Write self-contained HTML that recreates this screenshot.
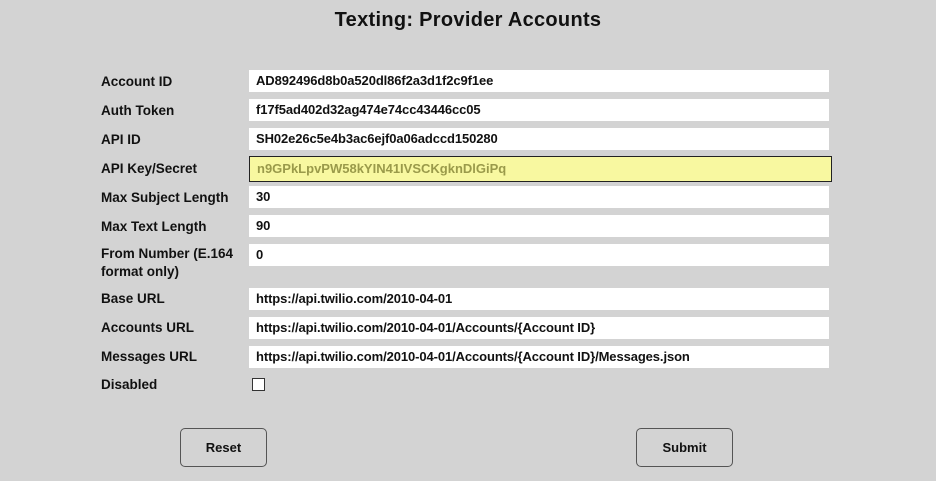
<!DOCTYPE html>
<html><head><meta charset="utf-8"><style>
html,body{margin:0;padding:0;}
body{width:936px;height:481px;background:#d3d3d3;position:relative;overflow:hidden;font-family:"Liberation Sans",Arial,sans-serif;color:#111;}
h1{position:absolute;left:0;width:936px;top:9px;margin:0;text-align:center;font-size:20px;font-weight:bold;letter-spacing:0.3px;}
.l{position:absolute;left:101px;font-size:13.5px;font-weight:bold;line-height:18px;}
.i{position:absolute;left:249px;width:573px;height:22px;background:#fff;font-size:13px;font-weight:bold;line-height:22px;padding-left:7px;letter-spacing:-0.1px;}
.k{background:#f8f8a0;color:#9a9a4a;border:1px solid #222;height:24px;line-height:24px;width:574px;font-weight:bold;letter-spacing:0;}
.cb{position:absolute;left:252px;top:378px;width:11px;height:11px;border:1px solid #333;background:#fff;}
.b{position:absolute;top:428px;height:37px;border:1px solid #555;border-radius:5px;font-size:13px;font-weight:bold;line-height:37px;text-align:center;}
</style></head><body>
<h1>Texting: Provider Accounts</h1>
<div class="l" style="top:73px">Account ID</div><div class="i" style="top:70px">AD892496d8b0a520dl86f2a3d1f2c9f1ee</div>
<div class="l" style="top:102px">Auth Token</div><div class="i" style="top:99px">f17f5ad402d32ag474e74cc43446cc05</div>
<div class="l" style="top:131px">API ID</div><div class="i" style="top:128px">SH02e26c5e4b3ac6ejf0a06adccd150280</div>
<div class="l" style="top:160px">API Key/Secret</div><div class="i k" style="top:156px">n9GPkLpvPW58kYIN41IVSCKgknDlGiPq</div>
<div class="l" style="top:189px">Max Subject Length</div><div class="i" style="top:186px">30</div>
<div class="l" style="top:218px">Max Text Length</div><div class="i" style="top:215px">90</div>
<div class="l" style="top:245px">From Number (E.164<br>format only)</div><div class="i" style="top:244px">0</div>
<div class="l" style="top:290px">Base URL</div><div class="i" style="top:288px">https://api.twilio.com/2010-04-01</div>
<div class="l" style="top:319px">Accounts URL</div><div class="i" style="top:317px">https://api.twilio.com/2010-04-01/Accounts/{Account ID}</div>
<div class="l" style="top:348px">Messages URL</div><div class="i" style="top:346px">https://api.twilio.com/2010-04-01/Accounts/{Account ID}/Messages.json</div>
<div class="l" style="top:376px">Disabled</div><div class="cb"></div>
<div class="b" style="left:180px;width:85px">Reset</div>
<div class="b" style="left:636px;width:95px">Submit</div>
</body></html>
